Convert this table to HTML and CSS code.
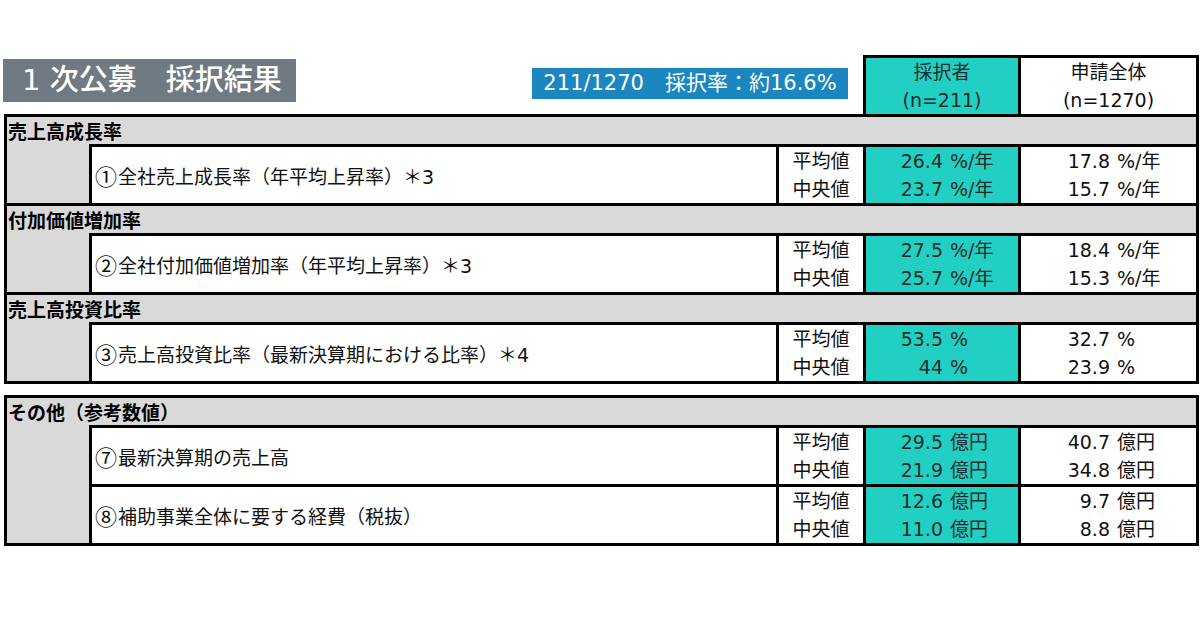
FILE: index.html
```html
<!DOCTYPE html>
<html lang="ja">
<head>
<meta charset="utf-8">
<title>1次公募 採択結果</title>
<link rel="stylesheet" href="styles.css">
</head>
<body>
<div class="page">
  <div class="top">
    <div class="title">1 次公募　採択結果</div>
    <div class="rate">211/1270　採択率：約16.6%</div>
    <div class="colhead">
      <div class="ch teal"><span>採択者</span><span>(n=211)</span></div>
      <div class="ch"><span>申請全体</span><span>(n=1270)</span></div>
    </div>
  </div>

  <div class="tbl">
    <section class="sec">
      <div class="sec-h">売上高成長率</div>
      <div class="sec-b">
        <div class="indent"></div>
        <div class="rows">
          <div class="row">
            <div class="lbl"><span class="cn">①</span>全社売上成長率（年平均上昇率）＊3</div>
            <div class="stat"><span>平均値</span><span>中央値</span></div>
            <div class="val teal">
              <div class="v"><span class="n">26.4</span><span class="u">%/年</span></div>
              <div class="v"><span class="n">23.7</span><span class="u">%/年</span></div>
            </div>
            <div class="val all">
              <div class="v"><span class="n">17.8</span><span class="u">%/年</span></div>
              <div class="v"><span class="n">15.7</span><span class="u">%/年</span></div>
            </div>
          </div>
        </div>
      </div>
    </section>
    <section class="sec">
      <div class="sec-h">付加価値増加率</div>
      <div class="sec-b">
        <div class="indent"></div>
        <div class="rows">
          <div class="row">
            <div class="lbl"><span class="cn">②</span>全社付加価値増加率（年平均上昇率）＊3</div>
            <div class="stat"><span>平均値</span><span>中央値</span></div>
            <div class="val teal">
              <div class="v"><span class="n">27.5</span><span class="u">%/年</span></div>
              <div class="v"><span class="n">25.7</span><span class="u">%/年</span></div>
            </div>
            <div class="val all">
              <div class="v"><span class="n">18.4</span><span class="u">%/年</span></div>
              <div class="v"><span class="n">15.3</span><span class="u">%/年</span></div>
            </div>
          </div>
        </div>
      </div>
    </section>
    <section class="sec">
      <div class="sec-h">売上高投資比率</div>
      <div class="sec-b">
        <div class="indent"></div>
        <div class="rows">
          <div class="row">
            <div class="lbl"><span class="cn">③</span>売上高投資比率（最新決算期における比率）＊4</div>
            <div class="stat"><span>平均値</span><span>中央値</span></div>
            <div class="val teal">
              <div class="v"><span class="n">53.5</span><span class="u">%</span></div>
              <div class="v"><span class="n">44</span><span class="u">%</span></div>
            </div>
            <div class="val all">
              <div class="v"><span class="n">32.7</span><span class="u">%</span></div>
              <div class="v"><span class="n">23.9</span><span class="u">%</span></div>
            </div>
          </div>
        </div>
      </div>
    </section>
  </div>

  <div class="tbl tbl2">
    <section class="sec">
      <div class="sec-h">その他（参考数値）</div>
      <div class="sec-b">
        <div class="indent"></div>
        <div class="rows">
          <div class="row">
            <div class="lbl"><span class="cn">⑦</span>最新決算期の売上高</div>
            <div class="stat"><span>平均値</span><span>中央値</span></div>
            <div class="val teal">
              <div class="v"><span class="n">29.5</span><span class="u">億円</span></div>
              <div class="v"><span class="n">21.9</span><span class="u">億円</span></div>
            </div>
            <div class="val all">
              <div class="v"><span class="n">40.7</span><span class="u">億円</span></div>
              <div class="v"><span class="n">34.8</span><span class="u">億円</span></div>
            </div>
          </div>
          <div class="row">
            <div class="lbl"><span class="cn">⑧</span>補助事業全体に要する経費（税抜）</div>
            <div class="stat"><span>平均値</span><span>中央値</span></div>
            <div class="val teal">
              <div class="v"><span class="n">12.6</span><span class="u">億円</span></div>
              <div class="v"><span class="n">11.0</span><span class="u">億円</span></div>
            </div>
            <div class="val all">
              <div class="v"><span class="n">9.7</span><span class="u">億円</span></div>
              <div class="v"><span class="n">8.8</span><span class="u">億円</span></div>
            </div>
          </div>
        </div>
      </div>
    </section>
  </div>
</div>
</body>
</html>
```

FILE: styles.css
```css
* { box-sizing: border-box; }

body {
  margin: 0;
  background: #ffffff;
  font-family: "DejaVu Sans", "Noto Sans CJK JP", sans-serif;
  color: #111;
  font-size: 19px;
}

.page {
  width: 1200px;
  height: 630px;
  padding-top: 55px;
}

/* ---------- top area ---------- */
.top {
  display: flex;
  align-items: flex-start;
  height: 59px;
}

.title {
  margin-left: 3px;
  margin-top: 4px;
  width: 293px;
  height: 43px;
  background: #6f7a82;
  color: #fff;
  font-size: 29px;
  font-weight: 500;
  line-height: 43px;
  padding-left: 19px;
  white-space: nowrap;
}

.rate {
  margin-left: 236px;
  margin-top: 13px;
  width: 316px;
  height: 31px;
  background: #1b86c0;
  color: #fff;
  font-size: 21px;
  line-height: 31px;
  text-align: center;
  white-space: nowrap;
}

.colhead {
  margin-left: 15px;
  width: 336px;
  height: 59px;
  border: 3px solid #000;
  border-bottom: 0;
  background: #000;
  display: grid;
  grid-template-columns: 152px 175px;
  column-gap: 3px;
}

.ch {
  background: #fff;
  display: flex;
  flex-direction: column;
  align-items: center;
}

.ch span {
  height: 28px;
  line-height: 28px;
}

.teal { background: #21cfc3; }
.ch.teal span, .val.teal { color: #1c2b2b; }

/* ---------- tables ---------- */
.tbl {
  margin-left: 4px;
  width: 1195px;
  border: 3px solid #000;
}

.tbl2 { margin-top: 11px; }

.sec + .sec { border-top: 3px solid #000; }

.sec-h {
  height: 27px;
  line-height: 27px;
  background: #d9d9d9;
  font-weight: bold;
  padding-left: 1px;
  font-family: "Noto Sans CJK JP", sans-serif;
  color: #000;
}

.sec-b {
  display: grid;
  grid-template-columns: 82px 1fr;
  background: #d9d9d9;
}

.rows {
  border-top: 3px solid #000;
  border-left: 3px solid #000;
  background: #000;
  display: flex;
  flex-direction: column;
  gap: 3px;
}

.row {
  display: grid;
  grid-template-columns: 684px 84px 152px 175px;
  column-gap: 3px;
  height: 56px;
  background: #000;
}

.lbl {
  background: #fff;
  display: flex;
  align-items: center;
  padding-left: 3px;
  font-size: 19px;
  white-space: nowrap;
}

.cn {
  font-family: "Noto Sans CJK JP", sans-serif;
  font-size: 22px;
  line-height: 1;
  margin-right: 1px;
}

.stat {
  background: #fff;
  display: flex;
  flex-direction: column;
  align-items: center;
}

.stat span {
  height: 28px;
  line-height: 28px;
}

.val {
  display: flex;
  flex-direction: column;
}

.val.all { background: #fff; }

.v {
  height: 28px;
  line-height: 28px;
  display: grid;
  column-gap: 7px;
  white-space: nowrap;
}

.teal .v { grid-template-columns: 77px auto; }
.all .v { grid-template-columns: 89px auto; }

.n { text-align: right; }
.u { text-align: left; }
```
